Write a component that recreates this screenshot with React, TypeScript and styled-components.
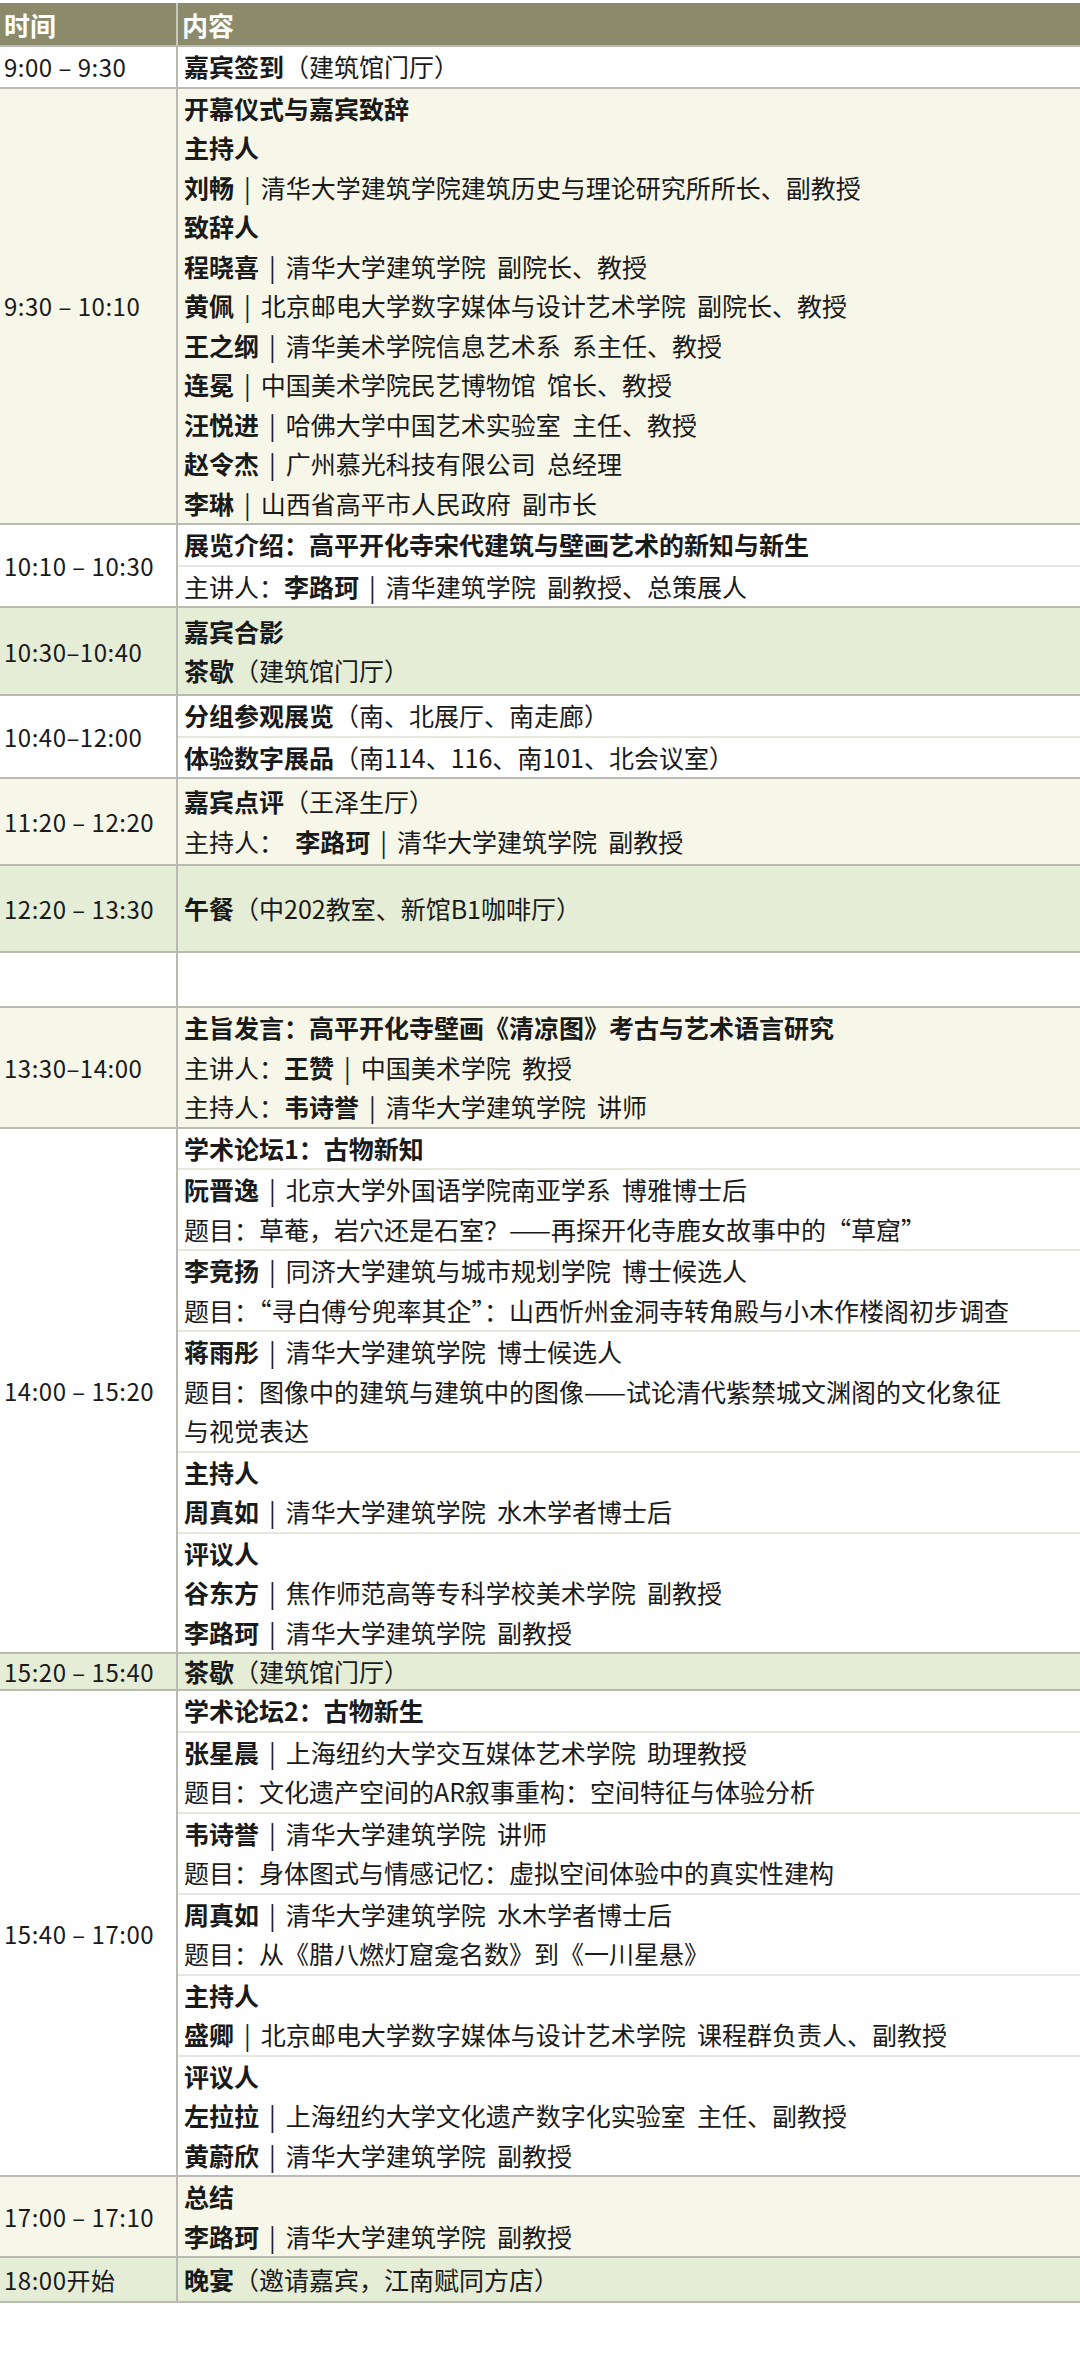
import React from 'react'
import styled, { createGlobalStyle } from 'styled-components'

const GlobalStyle = createGlobalStyle`
  body {
    margin: 0;
    background: #ffffff;
    font-family: "Noto Sans CJK SC", "Noto Sans", sans-serif;
    color: #1a1a1a;
  }
`

type Tone = 'white' | 'cream' | 'green'

const bg: Record<Tone, string> = {
  white: '#ffffff',
  cream: '#f6f7e9',
  green: '#e5edd6',
}

const Table = styled.div`
  width: 1080px;
  padding-top: 3px;
  border-bottom: 2px solid #b9bab2;
`

const HeaderRow = styled.div`
  display: grid;
  grid-template-columns: 176px 1fr;
  height: 42px;
  background: #8b8b6b;
  color: #ffffff;
  font-size: 26px;
  font-weight: 700;
  border-bottom: 2px solid #b9bab2;
`

const HeaderCell = styled.div<{ $first?: boolean }>`
  display: flex;
  align-items: center;
  padding-left: 4px;
  border-left: ${(p) => (p.$first ? 'none' : '2px solid #c9c9b9')};
`

const Row = styled.div<{ $tone: Tone; $min?: number }>`
  display: grid;
  grid-template-columns: 176px 1fr;
  background: ${(p) => bg[p.$tone]};
  min-height: ${(p) => p.$min ?? 0}px;
  border-bottom: 2px solid #b9bab2;
  &:last-child {
    border-bottom: none;
  }
`

const TimeCell = styled.div`
  display: flex;
  align-items: center;
  padding-left: 4px;
  font-size: 24px;
  letter-spacing: 0.5px;
  white-space: nowrap;
`

const ContentCell = styled.div`
  display: flex;
  flex-direction: column;
  justify-content: center;
  border-left: 2px solid #b9bab2;
`

const Group = styled.div<{ $line?: 'strong' | 'light' }>`
  padding: 0 6px;
  & + & {
    border-top: 2px solid ${(p) => (p.$line === 'light' ? '#e6e8de' : '#c3c4bb')};
  }
`

const Line = styled.div<{ $h?: number }>`
  font-size: 25px;
  line-height: ${(p) => p.$h ?? 39.5}px;
  white-space: pre;
`

const B = styled.b`
  font-weight: 700;
`

const Sep = styled.span`
  margin: 0 10px;
`

type G = React.ReactNode[]

const P = ({ n, t }: { n: string; t: string }) => (
  <Line>
    <B>{n}</B>
    <Sep>|</Sep>
    {t}
  </Line>
)

interface RowData {
  time: string
  tone: Tone
  min?: number
  light?: boolean
  groups: G[]
}

const rows: RowData[] = [
  {
    time: '9:00 – 9:30',
    tone: 'white',
    groups: [[<Line key="a"><B>嘉宾签到</B>（建筑馆门厅）</Line>]],
  },
  {
    time: '9:30 – 10:10',
    tone: 'cream',
    groups: [
      [
        <Line key="a"><B>开幕仪式与嘉宾致辞</B></Line>,
        <Line key="b"><B>主持人</B></Line>,
        <P key="c" n="刘畅" t="清华大学建筑学院建筑历史与理论研究所所长、副教授" />,
        <Line key="d"><B>致辞人</B></Line>,
        <P key="e" n="程晓喜" t="清华大学建筑学院  副院长、教授" />,
        <P key="f" n="黄佩" t="北京邮电大学数字媒体与设计艺术学院  副院长、教授" />,
        <P key="g" n="王之纲" t="清华美术学院信息艺术系  系主任、教授" />,
        <P key="h" n="连冕" t="中国美术学院民艺博物馆  馆长、教授" />,
        <P key="i" n="汪悦进" t="哈佛大学中国艺术实验室  主任、教授" />,
        <P key="j" n="赵令杰" t="广州慕光科技有限公司  总经理" />,
        <P key="k" n="李琳" t="山西省高平市人民政府  副市长" />,
      ],
    ],
  },
  {
    time: '10:10 – 10:30',
    tone: 'white',
    light: true,
    groups: [
      [<Line key="a"><B>展览介绍：高平开化寺宋代建筑与壁画艺术的新知与新生</B></Line>],
      [<Line key="b">主讲人：<B>李路珂</B><Sep>|</Sep>清华建筑学院  副教授、总策展人</Line>],
    ],
  },
  {
    time: '10:30–10:40',
    tone: 'green',
    min: 86,
    groups: [
      [
        <Line key="a"><B>嘉宾合影</B></Line>,
        <Line key="b"><B>茶歇</B>（建筑馆门厅）</Line>,
      ],
    ],
  },
  {
    time: '10:40–12:00',
    tone: 'white',
    light: true,
    groups: [
      [<Line key="a"><B>分组参观展览</B>（南、北展厅、南走廊）</Line>],
      [<Line key="b"><B>体验数字展品</B>（南114、116、南101、北会议室）</Line>],
    ],
  },
  {
    time: '11:20 – 12:20',
    tone: 'cream',
    min: 85,
    groups: [
      [
        <Line key="a"><B>嘉宾点评</B>（王泽生厅）</Line>,
        <Line key="b">主持人：  <B>李路珂</B><Sep>|</Sep>清华大学建筑学院  副教授</Line>,
      ],
    ],
  },
  {
    time: '12:20 – 13:30',
    tone: 'green',
    min: 85,
    groups: [[<Line key="a"><B>午餐</B>（中202教室、新馆B1咖啡厅）</Line>]],
  },
  { time: '', tone: 'white', min: 53, groups: [] },
  {
    time: '13:30–14:00',
    tone: 'cream',
    groups: [
      [
        <Line key="a"><B>主旨发言：高平开化寺壁画《清凉图》考古与艺术语言研究</B></Line>,
        <Line key="b">主讲人：<B>王赞</B><Sep>|</Sep>中国美术学院  教授</Line>,
        <Line key="c">主持人：<B>韦诗誉</B><Sep>|</Sep>清华大学建筑学院  讲师</Line>,
      ],
    ],
  },
  {
    time: '14:00 – 15:20',
    tone: 'white',
    groups: [
      [<Line key="a"><B>学术论坛1：古物新知</B></Line>],
      [
        <P key="a" n="阮晋逸" t="北京大学外国语学院南亚学系  博雅博士后" />,
        <Line key="b">题目：草菴，岩穴还是石室？——再探开化寺鹿女故事中的“草窟”</Line>,
      ],
      [
        <P key="a" n="李竞扬" t="同济大学建筑与城市规划学院  博士候选人" />,
        <Line key="b">题目：“寻白傅兮兜率其企”：山西忻州金洞寺转角殿与小木作楼阁初步调查</Line>,
      ],
      [
        <P key="a" n="蒋雨彤" t="清华大学建筑学院  博士候选人" />,
        <Line key="b">题目：图像中的建筑与建筑中的图像——试论清代紫禁城文渊阁的文化象征</Line>,
        <Line key="c">与视觉表达</Line>,
      ],
      [
        <Line key="a"><B>主持人</B></Line>,
        <P key="b" n="周真如" t="清华大学建筑学院  水木学者博士后" />,
      ],
      [
        <Line key="a"><B>评议人</B></Line>,
        <P key="b" n="谷东方" t="焦作师范高等专科学校美术学院  副教授" />,
        <P key="c" n="李路珂" t="清华大学建筑学院  副教授" />,
      ],
    ],
  },
  {
    time: '15:20 – 15:40',
    tone: 'green',
    groups: [[<Line key="a" $h={33}><B>茶歇</B>（建筑馆门厅）</Line>]],
  },
  {
    time: '15:40 – 17:00',
    tone: 'white',
    groups: [
      [<Line key="a"><B>学术论坛2：古物新生</B></Line>],
      [
        <P key="a" n="张星晨" t="上海纽约大学交互媒体艺术学院  助理教授" />,
        <Line key="b">题目：文化遗产空间的AR叙事重构：空间特征与体验分析</Line>,
      ],
      [
        <P key="a" n="韦诗誉" t="清华大学建筑学院  讲师" />,
        <Line key="b">题目：身体图式与情感记忆：虚拟空间体验中的真实性建构</Line>,
      ],
      [
        <P key="a" n="周真如" t="清华大学建筑学院  水木学者博士后" />,
        <Line key="b">题目：从《腊八燃灯窟龛名数》到《一川星悬》</Line>,
      ],
      [
        <Line key="a"><B>主持人</B></Line>,
        <P key="b" n="盛卿" t="北京邮电大学数字媒体与设计艺术学院  课程群负责人、副教授" />,
      ],
      [
        <Line key="a"><B>评议人</B></Line>,
        <P key="b" n="左拉拉" t="上海纽约大学文化遗产数字化实验室  主任、副教授" />,
        <P key="c" n="黄蔚欣" t="清华大学建筑学院  副教授" />,
      ],
    ],
  },
  {
    time: '17:00 – 17:10',
    tone: 'cream',
    groups: [
      [
        <Line key="a"><B>总结</B></Line>,
        <P key="b" n="李路珂" t="清华大学建筑学院  副教授" />,
      ],
    ],
  },
  {
    time: '18:00开始',
    tone: 'green',
    min: 43,
    groups: [[<Line key="a"><B>晚宴</B>（邀请嘉宾，江南赋同方店）</Line>]],
  },
]

export default function App() {
  return (
    <>
      <GlobalStyle />
      <Table>
        <HeaderRow>
          <HeaderCell $first>时间</HeaderCell>
          <HeaderCell>内容</HeaderCell>
        </HeaderRow>
        {rows.map((r, i) => (
          <Row key={i} $tone={r.tone} $min={r.min}>
            <TimeCell>{r.time}</TimeCell>
            <ContentCell>
              {r.groups.map((g, j) => (
                <Group key={j} $line={r.light ? 'light' : 'strong'}>
                  {g}
                </Group>
              ))}
            </ContentCell>
          </Row>
        ))}
      </Table>
    </>
  )
}
